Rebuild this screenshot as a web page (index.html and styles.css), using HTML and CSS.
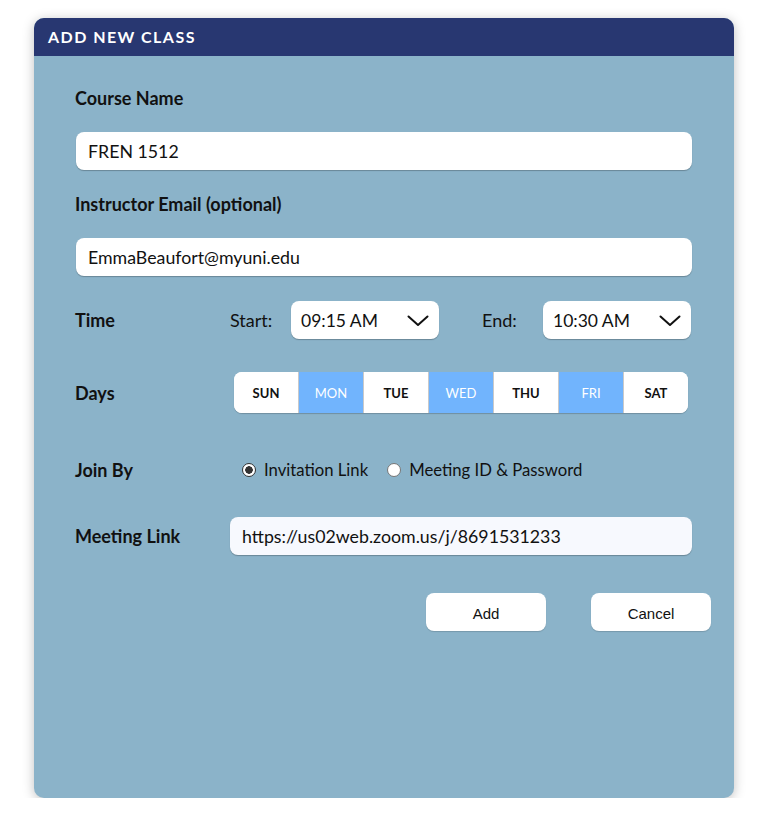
FILE: index.html
```html
<!DOCTYPE html>
<html>
<head>
<meta charset="utf-8">
<link rel="stylesheet" href="styles.css">
</head>
<body>
<div class="card">
  <div class="card-header">ADD NEW CLASS</div>
  <div class="form">
    <div class="label label-top">Course Name</div>
    <div class="input input-first">FREN 1512</div>
    <div class="label label-second">Instructor Email (optional)</div>
    <div class="input input-second">EmmaBeaufort@myuni.edu</div>

    <div class="row row-time">
      <div class="row-label">Time</div>
      <div class="time-label">Start:</div>
      <div class="select">
        <span>09:15 AM</span>
        <svg class="chev" width="22" height="12" viewBox="0 0 22 12"><path d="M1.5 1.5 L11 10 L20.5 1.5" fill="none" stroke="#111" stroke-width="2" stroke-linecap="round" stroke-linejoin="round"/></svg>
      </div>
      <div class="time-label time-label-end">End:</div>
      <div class="select">
        <span>10:30 AM</span>
        <svg class="chev" width="22" height="12" viewBox="0 0 22 12"><path d="M1.5 1.5 L11 10 L20.5 1.5" fill="none" stroke="#111" stroke-width="2" stroke-linecap="round" stroke-linejoin="round"/></svg>
      </div>
    </div>

    <div class="row row-days">
      <div class="row-label">Days</div>
      <div class="days">
        <div class="day">SUN</div>
        <div class="day on">MON</div>
        <div class="day">TUE</div>
        <div class="day on">WED</div>
        <div class="day">THU</div>
        <div class="day on">FRI</div>
        <div class="day">SAT</div>
      </div>
    </div>

    <div class="row row-join">
      <div class="row-label">Join By</div>
      <div class="radios">
        <span class="radio checked"></span><span class="radio-text">Invitation Link</span>
        <span class="radio radio-second"></span><span class="radio-text">Meeting ID &amp; Password</span>
      </div>
    </div>

    <div class="row row-link">
      <div class="row-label">Meeting Link</div>
      <div class="input input-link">https://us02web.zoom.us/j/8691531233</div>
    </div>

    <div class="buttons">
      <div class="btn">Add</div>
      <div class="btn">Cancel</div>
    </div>
  </div>
</div>
</body>
</html>
```

FILE: styles.css
```css
* { box-sizing: border-box; }
body {
  margin: 0;
  background: #ffffff;
  font-family: Lato, "Noto Sans", sans-serif;
  color: #111;
}
.card {
  margin: 18px 0 0 34px;
  width: 700px;
  height: 780px;
  border-radius: 10px;
  overflow: hidden;
  background: #8bb3c9;
  box-shadow: 0 2px 12px rgba(0,0,0,0.25);
}
.card-header {
  height: 38px;
  background: #283771;
  color: #fff;
  font-family: Lato, sans-serif;
  font-weight: 700;
  font-size: 16px;
  letter-spacing: 1.45px;
  line-height: 38px;
  padding-left: 14px;
}
.form {
  padding: 31px 42px 0 41px;
  display: flex;
  flex-direction: column;
}
.label, .row-label {
  font-weight: 700;
  font-size: 18px;
  line-height: 22px;
  color: #111;
}
.input {
  height: 38px;
  background: #fff;
  border-radius: 8px;
  box-shadow: 0 1px 1px rgba(0,0,0,0.25);
  font-size: 17.75px;
  line-height: 38px;
  padding-left: 12px;
  margin-left: 1px;
}
.input-first { margin-top: 23px; }
.label-second { margin-top: 23px; }
.input-second { margin-top: 23px; }
.row {
  display: flex;
  align-items: center;
}
.row-label { width: 155px; flex: none; }
.row-time { margin-top: 25px; }
.time-label {
  font-size: 18px;
  width: 61px;
  flex: none;
}
.time-label-end { margin-left: 43px; }
.select {
  width: 148px;
  height: 38px;
  background: #fff;
  border-radius: 8px;
  box-shadow: 0 1px 1px rgba(0,0,0,0.25);
  display: flex;
  align-items: center;
  justify-content: space-between;
  padding: 0 10px 0 10px;
  font-size: 17.5px;
}
.chev { display: block; margin-top: 1px; }
.row-days { margin-top: 33px; }
.days {
  margin-left: 4px;
  display: flex;
  width: 454px;
  height: 41px;
  border-radius: 8px;
  overflow: hidden;
  background: #fff;
  box-shadow: 0 1px 1px rgba(0,0,0,0.2);
}
.day {
  flex: 1;
  display: flex;
  align-items: center;
  justify-content: center;
  font-size: 13px;
  font-weight: 700;
  color: #111;
  background: #fff;
  border-left: 1px solid #c9c9c9;
}
.day:first-child { border-left: none; }
.day.on {
  background: #71b4fd;
  color: #fff;
  font-weight: 400;
}
.row-join { margin-top: 46px; }
.radios {
  display: flex;
  align-items: center;
  font-size: 16.7px;
  margin-left: 12px;
}
.radio {
  width: 14px;
  height: 14px;
  border-radius: 50%;
  border: 1px solid #767676;
  background: #fff;
  flex: none;
  margin-right: 8px;
}
.radio.checked {
  border: 1.5px solid #333;
  background: radial-gradient(circle, #333 0 3.5px, #fff 4px);
}
.radio-second { margin-left: 19px; }
.radio-text { line-height: 22px; }
.row-link { margin-top: 36px; }
.input-link {
  flex: 1;
  margin-left: 0;
  background: #f7f9fe;
}
.buttons {
  margin-top: 38px;
  margin-right: -19px;
  display: flex;
  justify-content: flex-end;
  gap: 45px;
}
.btn {
  width: 120px;
  height: 38px;
  background: #fff;
  border-radius: 8px;
  box-shadow: 0 1px 1px rgba(0,0,0,0.15);
  font-family: "Liberation Sans", Arial, sans-serif;
  font-size: 15px;
  line-height: 38px;
  padding-top: 2px;
  text-align: center;
  color: #111;
}
```
